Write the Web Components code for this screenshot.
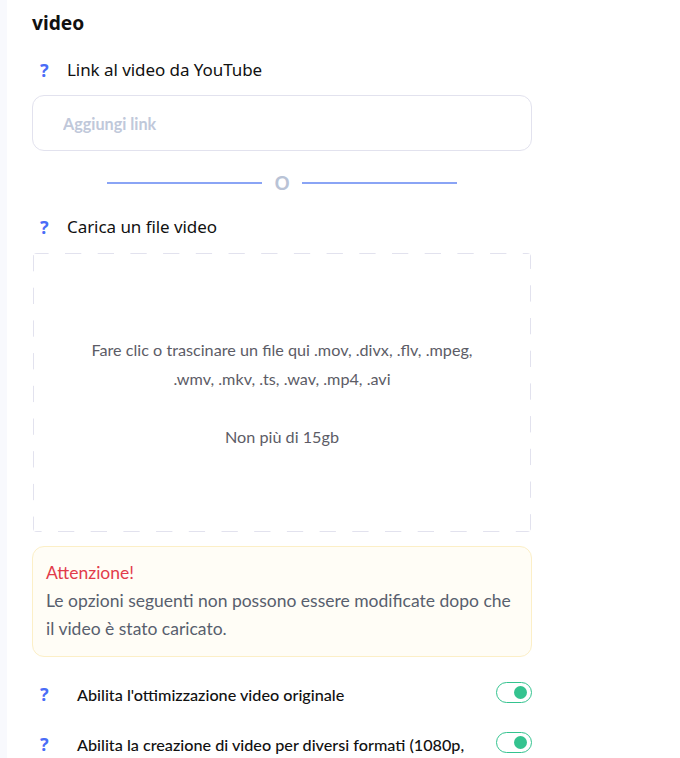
<!DOCTYPE html>
<html lang="it">
<head>
<meta charset="utf-8">
<title>video</title>
<style>
  html, body { margin: 0; height: 100%; background: #fff; overflow: hidden; }
  body { font-family: "Lato", sans-serif; }
</style>
</head>
<body>
<upload-page>
  <h-label>Link al video da YouTube</h-label>
  <link-input placeholder="Aggiungi link"></link-input>
  <or-divider>O</or-divider>
  <h-label>Carica un file video</h-label>
  <drop-zone>
    <div>Fare clic o trascinare un file qui .mov, .divx, .flv, .mpeg,<br>.wmv, .mkv, .ts, .wav, .mp4, .avi</div>
    <div>Non più di 15gb</div>
  </drop-zone>
  <warn-box title="Attenzione!">Le opzioni seguenti non possono essere modificate dopo che il video è stato caricato.</warn-box>
  <option-row>Abilita l'ottimizzazione video originale</option-row>
  <option-row>Abilita la creazione di video per diversi formati (1080p,</option-row>
</upload-page>
<script>
class UploadPage extends HTMLElement {
  connectedCallback() {
    this.attachShadow({ mode: 'open' });
    this.shadowRoot.innerHTML = `
      <style>
        :host { display: flex; height: 758px; overflow: hidden; }
        .strip { width: 7px; flex: none; background: #f8f9fd; }
        main { width: 500px; margin-left: 25px; padding-top: 11px; }
        h2 { margin: 0 0 23px; font: 700 19.2px/24px "Noto Sans", sans-serif; color: #111; }
      </style>
      <div class="strip"></div>
      <main>
        <h2>video</h2>
        <slot></slot>
      </main>
    `;
  }
}
class HLabel extends HTMLElement {
  connectedCallback() {
    this.attachShadow({ mode: 'open' });
    this.shadowRoot.innerHTML = `
      <style>
        :host { display: flex; align-items: center; height: 24px; font: 400 17px/24px "Noto Sans", sans-serif; letter-spacing: -.06px; color: #111; }
        b { width: 35px; padding-left: 8px; box-sizing: border-box; font: 700 18px/24px "Noto Sans", sans-serif; color: #4a6cf7; }
      </style>
      <b>?</b><span><slot></slot></span>
    `;
  }
}
class LinkInput extends HTMLElement {
  connectedCallback() {
    this.attachShadow({ mode: 'open' });
    this.shadowRoot.innerHTML = `
      <style>
        :host { display: block; margin-top: 13px; }
        input { display: block; width: 100%; height: 56px; box-sizing: border-box; padding: 0 30px; border: 1px solid #e2e2ee; border-radius: 12px; background: #fff; font: 700 16.2px "Lato", sans-serif; outline: none; }
        input::placeholder { color: #c0c8da; opacity: 1; }
      </style>
      <input type="text" placeholder="${this.getAttribute('placeholder')}">
    `;
  }
}
class OrDivider extends HTMLElement {
  connectedCallback() {
    this.attachShadow({ mode: 'open' });
    this.shadowRoot.innerHTML = `
      <style>
        :host { display: flex; align-items: center; justify-content: center; width: 350px; height: 24px; margin: 20px 0 20px 75px; font: 600 20px/24px "Noto Sans", sans-serif; color: #b9c3d6; }
        i { flex: 1; height: 2px; background: #8aa4f5; }
        span { width: 40px; text-align: center; }
      </style>
      <i></i><span><slot></slot></span><i></i>
    `;
  }
}
class DropZone extends HTMLElement {
  connectedCallback() {
    this.attachShadow({ mode: 'open' });
    this.shadowRoot.innerHTML = `
      <style>
        :host { display: flex; flex-direction: column; justify-content: center; gap: 29px; position: relative; width: 498px; height: 279px; margin: 14px 0 14px 1px; text-align: center; font: 400 16.2px/29px "Lato", sans-serif; color: #5c5c66; }
        svg { position: absolute; inset: 0; width: 100%; height: 100%; }
      </style>
      <svg viewBox="0 0 498 279" fill="none" stroke="#e2e2ee" stroke-dasharray="16.3 16.4">
        <clipPath id="c"><rect width="498" height="279" rx="4"/></clipPath>
        <g clip-path="url(#c)">
          <path d="M-.7 .5H498"/>
          <path d="M.5 2V279"/>
          <path d="M497.5 -.4V279"/>
          <path d="M-7.7 278.5H498"/>
        </g>
      </svg>
      <slot></slot>
    `;
  }
}
class WarnBox extends HTMLElement {
  connectedCallback() {
    this.attachShadow({ mode: 'open' });
    this.shadowRoot.innerHTML = `
      <style>
        :host { display: block; box-sizing: border-box; height: 111px; margin-bottom: 25px; padding: 12px 13px; border: 1px solid #fcefc7; border-radius: 12px; background: #fffdf6; font: 400 17.5px/28px "Lato", sans-serif; color: #585f6e; }
        div { color: #e23b4a; }
      </style>
      <div>${this.getAttribute('title')}</div>
      <slot></slot>
    `;
  }
}
class OptionRow extends HTMLElement {
  connectedCallback() {
    this.attachShadow({ mode: 'open' });
    this.shadowRoot.innerHTML = `
      <style>
        :host { display: grid; grid-template-columns: 45px 1fr 36px; align-items: start; margin-bottom: 22px; min-height: 28px; font: 500 16.2px/26px "Lato", sans-serif; color: #111; }
        b { padding-left: 8px; font: 700 18px/24px "Noto Sans", sans-serif; color: #4a6cf7; }
        span { padding-right: 20px; }
        em { display: block; position: relative; box-sizing: border-box; width: 36px; height: 21px; border: 1px solid #34c38f; border-radius: 11px; }
        em::after { content: ""; position: absolute; right: 4px; top: 3px; width: 13px; height: 13px; border-radius: 50%; background: #34c38f; }
      </style>
      <b>?</b><span><slot></slot></span><em></em>
    `;
  }
}
customElements.define('upload-page', UploadPage);
customElements.define('h-label', HLabel);
customElements.define('link-input', LinkInput);
customElements.define('or-divider', OrDivider);
customElements.define('drop-zone', DropZone);
customElements.define('warn-box', WarnBox);
customElements.define('option-row', OptionRow);
</script>
</body>
</html>
